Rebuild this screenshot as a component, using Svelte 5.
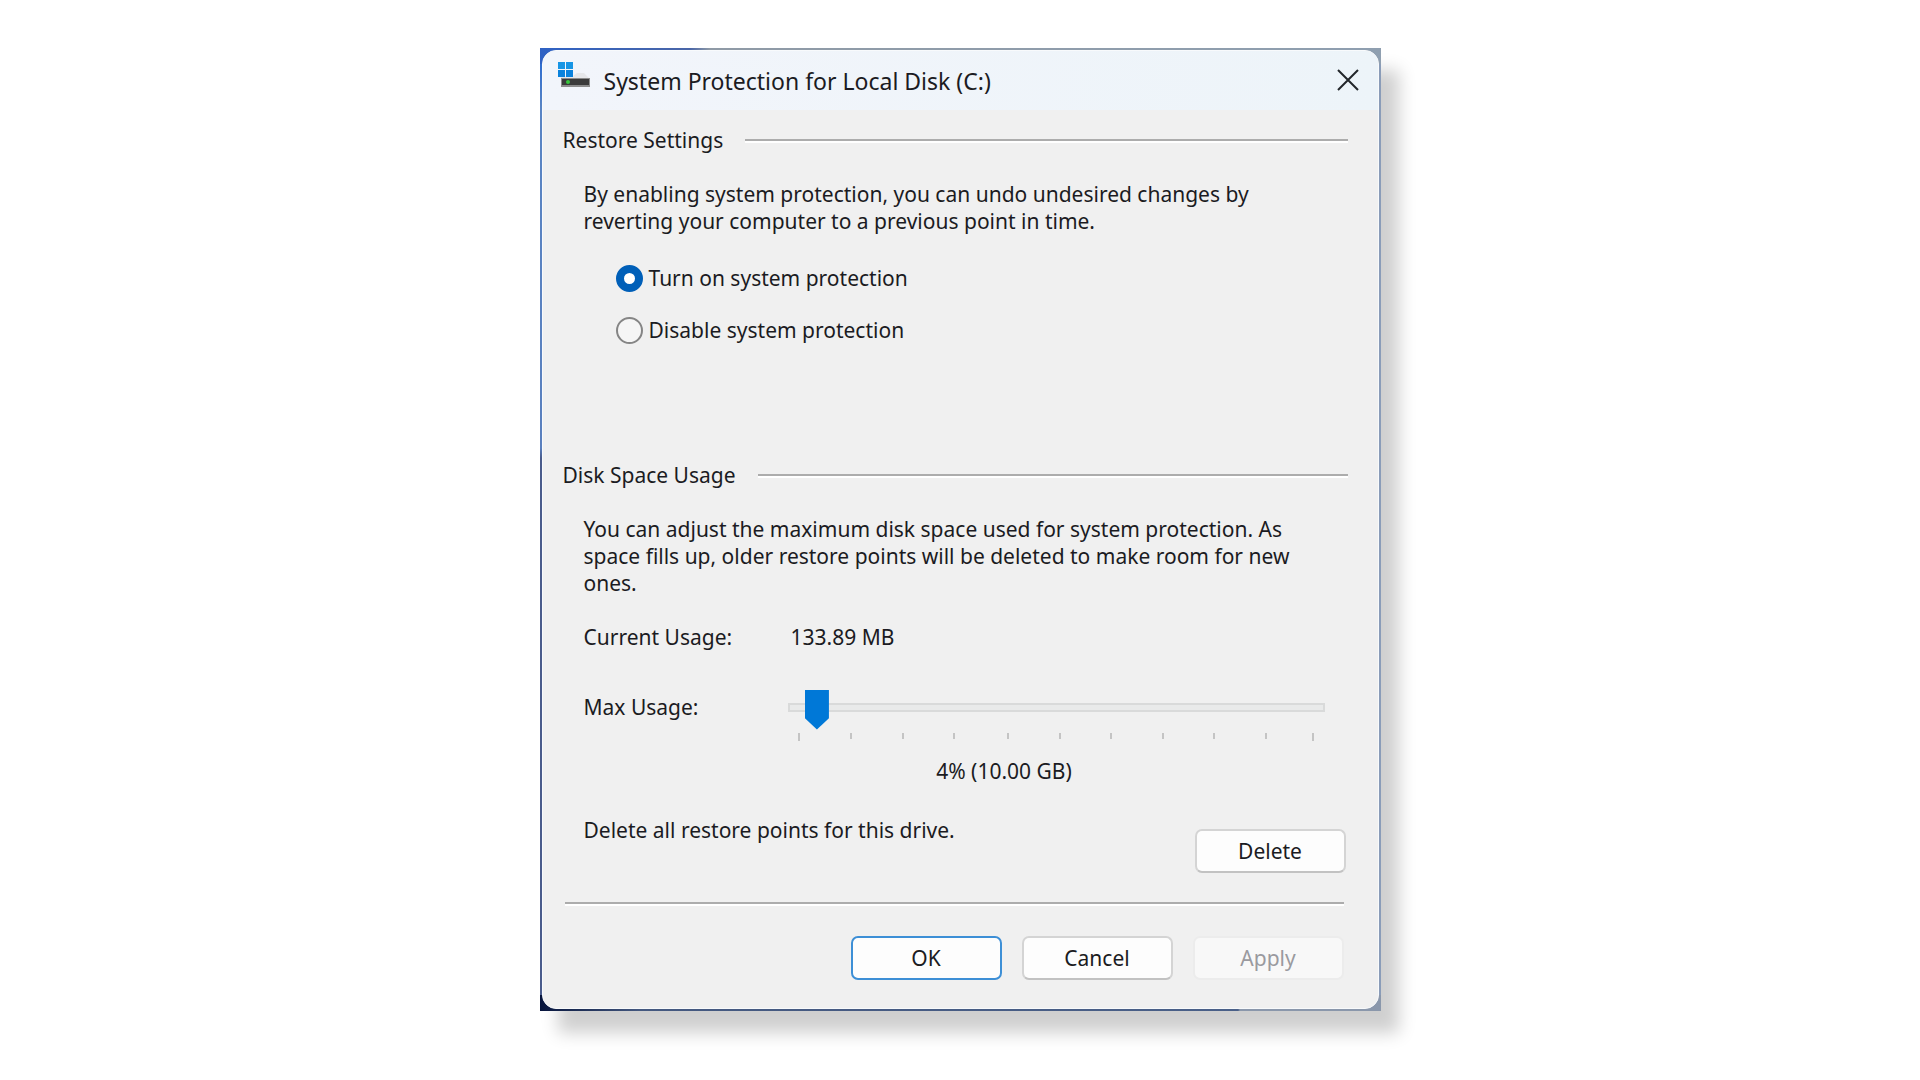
<script lang="ts">
  let protection: string = 'on';
  let maxUsage: number = 4;

  const diskSize = 250;
  const ticks = [0, 52, 104, 155, 209, 261, 312, 364, 415, 467, 514];

  $: usageLabel = `${maxUsage}% (${(diskSize * maxUsage / 100).toFixed(2)} GB)`;
</script>

<div class="desktop">
  <div class="frame">
    <main class="dialog">
      <header class="title-bar">
        <svg class="drive-icon" viewBox="0 0 33 27" aria-hidden="true">
          <path d="M15 14 L19 11 H26 L31 16 H3 V14 Z" fill="#e6e7ea" />
          <rect x="0" y="0" width="7" height="7" fill="#1795e5" />
          <rect x="8" y="0" width="7" height="7" fill="#1795e5" />
          <rect x="0" y="8" width="7" height="7" fill="#0b82dc" />
          <rect x="8" y="8" width="7" height="7" fill="#0b82dc" />
          <rect x="3" y="16" width="29" height="9" fill="#8c8c8c" />
          <rect x="4" y="17" width="27" height="6" fill="#3b3b3b" />
          <circle cx="10" cy="20" r="2" fill="#37c83c" />
        </svg>
        <h1>System Protection for Local Disk (C:)</h1>
        <button class="close" aria-label="Close">
          <svg viewBox="0 0 22 22" aria-hidden="true">
            <path d="M1 1 L21 21 M21 1 L1 21" fill="none" stroke="#22262a" stroke-width="2" />
          </svg>
        </button>
      </header>

      <section class="restore">
        <h2>Restore Settings</h2>
        <div class="group">
          <p>By enabling system protection, you can undo undesired changes by<br />reverting your computer to a previous point in time.</p>
          <div class="options">
            <label>
              <input type="radio" name="protection" value="on" bind:group={protection} />
              Turn on system protection
            </label>
            <label>
              <input type="radio" name="protection" value="off" bind:group={protection} />
              Disable system protection
            </label>
          </div>
        </div>
      </section>

      <section class="usage">
        <h2>Disk Space Usage</h2>
        <div class="group">
          <p>You can adjust the maximum disk space used for system protection. As<br />space fills up, older restore points will be deleted to make room for new<br />ones.</p>
          <div class="row">
            <span class="name">Current Usage:</span>
            <span class="amount">133.89 MB</span>
          </div>
          <div class="row max">
            <label class="name" for="max-usage">Max Usage:</label>
            <div class="slider">
              <input id="max-usage" type="range" min="1" max="100" bind:value={maxUsage} />
              <svg class="ticks" viewBox="0 0 537 8" preserveAspectRatio="none" aria-hidden="true">
                {#each ticks as x, i}
                  <rect x={x + 10} y="0" width="2" height={i === 0 || i === ticks.length - 1 ? 8 : 6} fill="#c4c4c4" />
                {/each}
              </svg>
              <output for="max-usage">{usageLabel}</output>
            </div>
          </div>
          <div class="delete-row">
            <span>Delete all restore points for this drive.</span>
            <button class="btn">Delete</button>
          </div>
        </div>
      </section>

      <footer>
        <button class="btn primary">OK</button>
        <button class="btn">Cancel</button>
        <button class="btn" disabled>Apply</button>
      </footer>
    </main>
  </div>
</div>

<style>
  :global(body) {
    margin: 0;
    background: #fff;
  }

  .desktop {
    display: flex;
    justify-content: center;
    padding: 48px 24px 68px;
    font-family: "Noto Sans", sans-serif;
    font-size: 21px;
    line-height: 27px;
    color: #1b1b22;
  }

  /* strip of wallpaper that shows round the rounded window */
  .frame {
    box-sizing: border-box;
    width: 100%;
    max-width: 841px;
    padding: 2px;
    background:
      linear-gradient(90deg, #2f62c4 0, #4a66a8 150px, #8f9aa6 170px, #8f9fb0 100%) top / 100% 16px no-repeat,
      linear-gradient(90deg, #06143c 0, #44587f 100px, #4a6088 698px, #8a97ab 700px) bottom / 100% 16px no-repeat,
      linear-gradient(90deg, transparent 50%, #8a9cb8 50%),
      linear-gradient(#2166d4 0, #5a85c4 60px, #5a80be 400px, #4a5c8c 410px, #4a5c8c 100%);
    box-shadow: 18px 22px 16px rgba(0, 0, 0, 0.19);
  }

  .dialog {
    box-sizing: border-box;
    border: 1px solid #f8fafc;
    border-radius: 14px;
    background: #f0f0f0;
    overflow: hidden;
  }

  .title-bar {
    display: flex;
    align-items: center;
    height: 59px;
    padding: 0 19px 0 15px;
    background: linear-gradient(90deg, #f2f5fb, #edf4f9);
  }

  .drive-icon {
    width: 33px;
    height: 27px;
    margin-right: 13px;
    margin-bottom: 10px;
  }

  h1,
  h2 {
    margin: 0;
    font-weight: 400;
  }

  h1 {
    flex: 1;
    font-size: 23px;
    line-height: 32px;
  }

  .close {
    width: 22px;
    height: 22px;
    margin-bottom: 2px;
    padding: 0;
    border: none;
    background: none;
  }

  .close svg {
    display: block;
  }

  section {
    padding: 0 30px 0 20px;
  }

  h2 {
    display: flex;
    align-items: center;
    gap: 22px;
    font-size: 21px;
  }

  h2::after {
    content: "";
    flex: 1;
    height: 2px;
    background: #acacac;
    border-bottom: 2px solid #fff;
  }

  .group {
    padding-left: 21px;
  }

  p {
    margin: 0;
    white-space: nowrap;
  }

  .restore {
    padding-top: 17px;
  }

  .restore p,
  .usage p {
    margin-top: 27px;
  }

  .options {
    display: flex;
    flex-direction: column;
    align-items: flex-start;
    gap: 24px;
    margin: 29px 0 0 32px;
  }

  .options label {
    display: flex;
    align-items: center;
    gap: 6px;
    height: 28px;
  }

  .options input {
    appearance: none;
    box-sizing: border-box;
    width: 27px;
    height: 27px;
    margin: 0;
    border: 2px solid #858585;
    border-radius: 50%;
    background: #f5f5f5;
  }

  .options input:checked {
    border: 8px solid #005fb8;
    background: #fff;
  }

  .usage {
    padding-top: 118px;
  }

  .row {
    display: flex;
    margin-top: 27px;
  }

  .name {
    width: 204px;
  }

  .amount {
    padding-left: 3px;
  }

  .max {
    margin-top: 36px;
  }

  .max .name {
    padding-top: 7px;
  }

  .slider {
    display: flex;
    flex: 1;
    flex-direction: column;
    padding-right: 23px;
  }

  .slider input {
    appearance: none;
    width: 100%;
    height: 40px;
    margin: 0;
    background: none;
  }

  .slider input::-webkit-slider-runnable-track {
    box-sizing: border-box;
    height: 9px;
    border: 2px solid #d9dada;
    background: #e9eaea;
  }

  .slider input::-webkit-slider-thumb {
    appearance: none;
    width: 24px;
    height: 40px;
    margin-top: -15px;
    background: #0078d7;
    clip-path: polygon(0 0, 100% 0, 100% 72%, 50% 100%, 0 72%);
  }

  .ticks {
    width: 100%;
    height: 8px;
    margin-top: 6px;
  }

  output {
    align-self: center;
    margin: 17px 0 0;
    padding-right: 104px;
  }

  .delete-row {
    display: flex;
    justify-content: space-between;
    margin-top: 32px;
    padding-right: 2px;
  }

  .delete-row .btn {
    margin-top: 12px;
  }

  .btn {
    box-sizing: border-box;
    width: 151px;
    height: 44px;
    padding: 0;
    border: 2px solid #d4d4d4;
    border-bottom-color: #c2c2c2;
    border-radius: 7px;
    background: #fdfdfd;
    color: inherit;
    font: inherit;
  }

  .btn.primary {
    border-color: #3d8fd6;
  }

  .btn:disabled {
    border-color: #ececec;
    background: #f8f8f8;
    color: #9a9a9f;
  }

  footer {
    display: flex;
    justify-content: flex-end;
    gap: 20px;
    margin: 29px 34px 0 22px;
    padding: 32px 0 28px;
    border-top: 2px solid #acacac;
    box-shadow: inset 0 2px #fff;
  }
</style>
